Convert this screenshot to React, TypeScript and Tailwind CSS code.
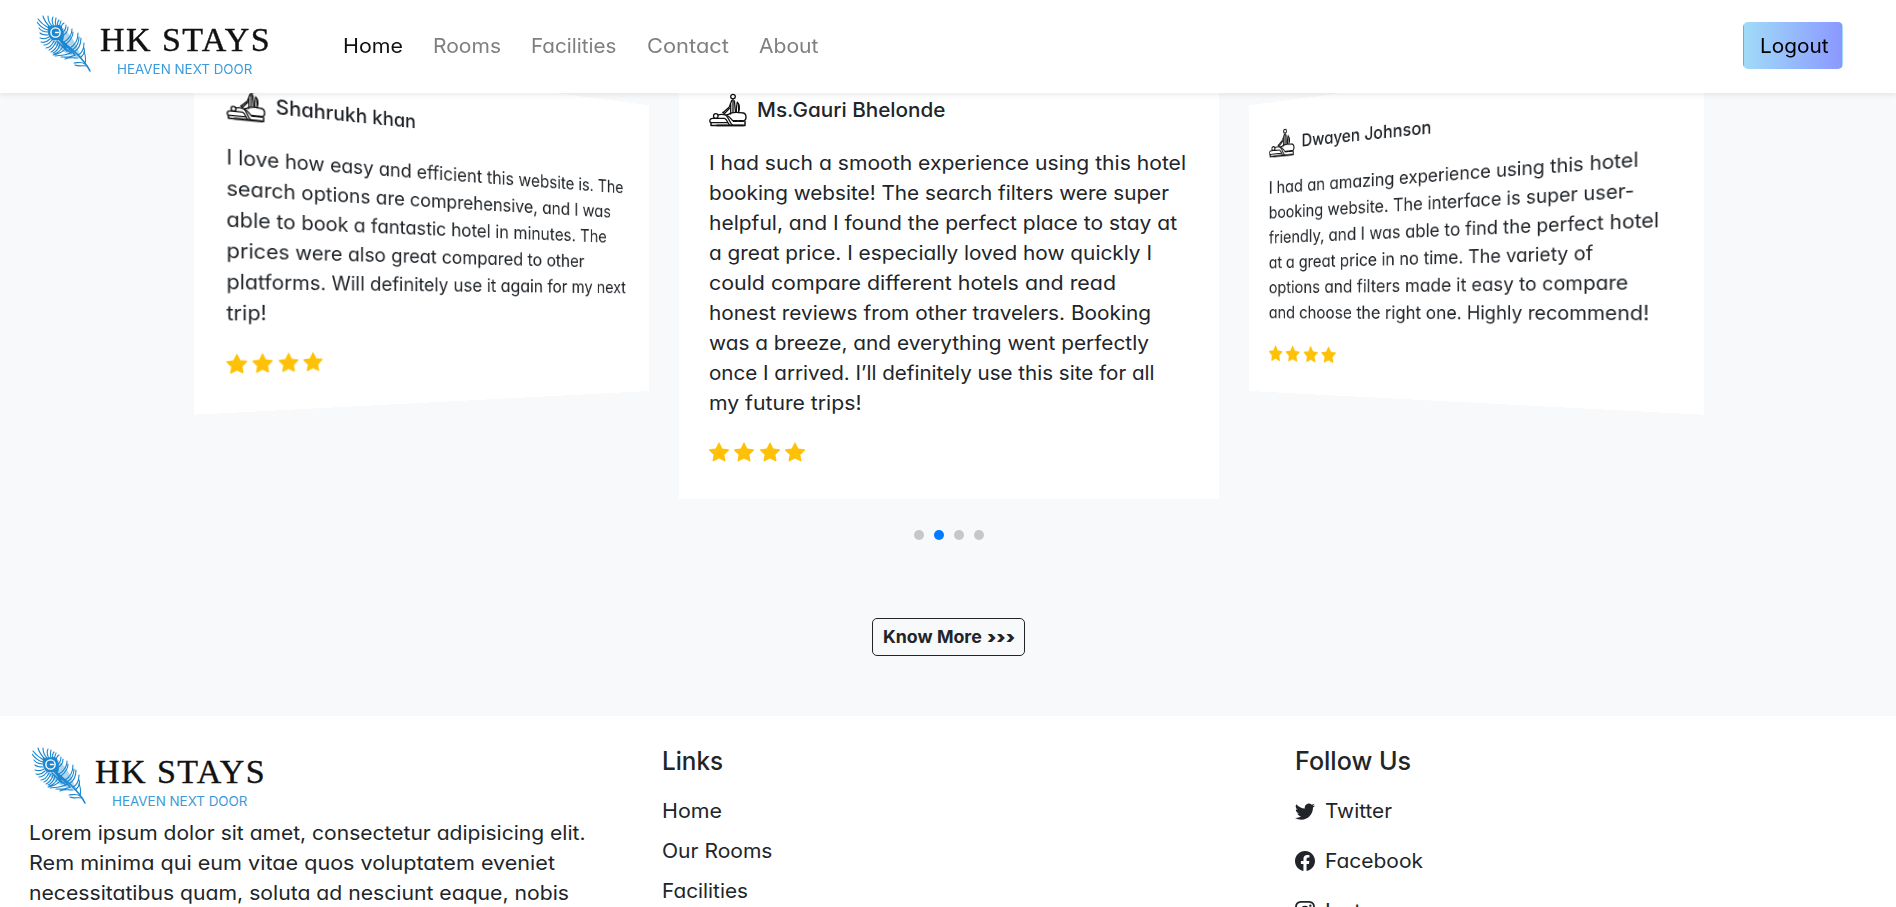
import { useLayoutEffect, useRef } from "react";
import type { ReactNode } from "react";
import { BsFacebook, BsInstagram, BsStarFill, BsTwitter } from "react-icons/bs";

type FitProps = { w: number; track?: boolean; className?: string; children: string };

/* Sets a single line of text to exactly `w` pixels, by widening its glyphs or, with `track`, its letter gaps. */
function Fit({ w, track = false, className = "", children }: FitProps) {
  const ref = useRef<HTMLSpanElement>(null);
  useLayoutEffect(() => {
    const el = ref.current;
    if (!el) return;
    el.style.letterSpacing = "0px";
    const natural = parseFloat(getComputedStyle(el).width);
    if (track) {
      el.style.letterSpacing = `${(w - natural) / children.length}px`;
    } else {
      el.style.transform = `scaleX(${w / natural})`;
    }
  }, [w, track, children]);
  return (
    <span className={`inline-block whitespace-pre ${className}`} style={{ width: w }}>
      <span ref={ref} className="inline-block origin-left">
        {children}
      </span>
    </span>
  );
}

function Feather() {
  return (
    <svg viewBox="0 0 54 57" className="h-[57px] w-[54px] shrink-0" fill="none" stroke="#1b87d0" strokeLinecap="round">
      <path d="M11 11L23 10C31 17 38 25 42 37L45 43C36 42 27 39 20 31C13 26 10 18 11 11Z" fill="#1b87d0" fillOpacity="0.35" stroke="none" />
      <path d="M53 56C49 48 45 44 39 38C32 32 25 27 20 20" strokeWidth="1.6" />
      <g strokeWidth="1.1">
        <path d="M12 13C8 11 4 8 1 4M11 15C7 14 3 11 0 7M11 17C7 17 4 16 2 13M11 20C8 20 5 20 3 18M12 22C9 24 6 24 3 23M13 24C10 27 7 28 4 27" />
        <path d="M13 12C10 9 7 5 6 1M15 11C12 8 11 4 11 1M17 11C15 8 15 4 16 2M19 11C18 8 18 6 19 3M21 12C20 8 21 6 22 5M23 13C22 10 23 8 24 6M24 15C24 11 25 9 27 8" />
        <path d="M15 25C12 29 9 30 7 30M17 26C15 30 12 33 9 33M19 27C17 31 15 34 12 35M21 28C20 32 18 35 14 37M23 29C22 33 19 37 16 38" />
        <path d="M25 18C28 16 29 13 29 10M25 21C29 19 31 15 31 12M27 27C32 24 35 19 35 14M29 29C34 25 36 21 36 17M33 33C38 30 41 25 41 18M35 35C40 32 42 28 42 22M37 37C42 34 44 29 44 23M41 40C45 38 47 34 47 28M43 43C47 40 48 36 47 33" />
        <path d="M26 31C24 35 21 38 17 39M29 33C26 37 22 39 16 40M35 37C30 41 23 40 18 41M38 40C33 43 27 42 24 42M41 43C37 43 32 42 28 44M48 49C44 46 41 48 37 48M50 51C46 50 42 52 38 50M48 49C49 44 49 41 47 37" />
        <path d="M22 24L29 33M20 26L30 36M25 26L33 35M24 30L34 38M28 29L38 40" strokeWidth="1.6" />
      </g>
      <path d="M11.5 11.5L23 10.5C26 14 27 19 26 24.5L15 24.5C12 22 10.5 17 11.5 11.5Z" fill="#1b87d0" />
      <circle cx="18.5" cy="17.5" r="4.6" stroke="#fff" strokeWidth="1.4" />
      <path d="M18.5 17.5h2.8" stroke="#fff" strokeWidth="1.3" />
    </svg>
  );
}

function Logo() {
  return (
    <div className="flex items-start">
      <Feather />
      <div className="ml-[9px] flex flex-col items-start pt-[9px]">
        <Fit track w={171} className="font-['Liberation_Serif',serif] text-[34px] leading-[32px] text-[#111] [-webkit-text-stroke:0.4px_#111]">
          HK STAYS
        </Fit>
        <Fit w={135.5} className="mt-px ml-[16.5px] text-[13px] leading-[24px] text-[#3b9ad9]">
          HEAVEN NEXT DOOR
        </Fit>
      </div>
    </div>
  );
}

function MassageIcon() {
  return (
    <svg viewBox="0 0 38 38" className="h-[38px] w-[38px] shrink-0" fill="none" stroke="#111" strokeWidth="1.3" strokeLinecap="round" strokeLinejoin="round">
      <circle cx="24" cy="6.6" r="2.3" />
      <path d="M24 9V22M22.7 10.5L20.3 17L14.2 22.4M25.4 10.8L26.4 21.8M21.7 14V24" />
      <path d="M20.3 18.5L15.5 23.6L13.8 22.4" />
      <path d="M27.4 22C27 18 28 14.5 28.3 12.2C30.6 14.5 30.8 19 29.6 22.6" />
      <path d="M29.5 14.5V22" strokeWidth="1" />
      <path d="M20 24.2C22 22.2 30 22.4 34.5 23C37.6 23.8 38 29.6 34.8 31H24.5C22 30 21 26 17 25.2L20 24.2Z" />
      <circle cx="6.8" cy="26" r="2.3" />
      <path d="M9 24.8C12 24.2 15 24.4 17 25.2C19.6 27 20 32 23.4 35.2M3.6 28.4C.2 28.4 .2 32.4 2 32.6H18M3.6 28.4H15.5C18 29 18.6 33 20.6 35.4" />
      <path d="M2 32.6V35.4H36V31.4" strokeWidth="1.5" />
      <path d="M8 35.4H34" strokeWidth="1.9" />
      <path d="M24.5 31H28M30 31H34" strokeWidth="1.8" />
    </svg>
  );
}

type Review = { name: string; nameWidth: number; lines: [string, number][] };

const reviews: Review[] = [
  {
    name: "Shahrukh khan",
    nameWidth: 151,
    lines: [
      ["I love how easy and efficient this website is. The", 471.5],
      ["search options are comprehensive, and I was", 453],
      ["able to book a fantastic hotel in minutes. The", 447],
      ["prices were also great compared to other", 415],
      ["platforms. Will definitely use it again for my next", 475],
      ["trip!", 39],
    ],
  },
  {
    name: "Ms.Gauri Bhelonde",
    nameWidth: 188.5,
    lines: [
      ["I had such a smooth experience using this hotel", 477],
      ["booking website! The search filters were super", 460],
      ["helpful, and I found the perfect place to stay at", 468],
      ["a great price. I especially loved how quickly I", 443],
      ["could compare different hotels and read", 407],
      ["honest reviews from other travelers. Booking", 442],
      ["was a breeze, and everything went perfectly", 440],
      ["once I arrived. I’ll definitely use this site for all", 445.5],
      ["my future trips!", 152.5],
    ],
  },
  {
    name: "Dwayen Johnson",
    nameWidth: 172.5,
    lines: [
      ["I had an amazing experience using this hotel", 448],
      ["booking website. The interface is super user-", 444],
      ["friendly, and I was able to find the perfect hotel", 468],
      ["at a great price in no time. The variety of", 402.5],
      ["options and filters made it easy to compare", 438],
      ["and choose the right one. Highly recommend!", 458.5],
    ],
  },
];

function ReviewCard({ review, className = "" }: { review: Review; className?: string }) {
  return (
    <article className={`w-[540px] bg-white p-[30px] text-[#212529] ${className}`}>
      <div className="mb-5 flex items-center">
        <MassageIcon />
        <h6 className="ml-[9.5px] flex pt-[2px] text-[20px] leading-6 font-medium">
          <Fit w={review.nameWidth}>{review.name}</Fit>
        </h6>
      </div>
      <p className="mb-5 flex flex-col items-start text-[20px] leading-[30px]">
        {review.lines.map(([text, w]) => (
          <Fit key={text} w={w}>
            {text}
          </Fit>
        ))}
      </p>
      <div className="flex h-[31px] items-start gap-[5.4px] pt-[4.4px] text-[20px] text-[#ffc107]">
        <BsStarFill />
        <BsStarFill />
        <BsStarFill />
        <BsStarFill />
      </div>
    </article>
  );
}

function Header() {
  const links: [string, number, string][] = [
    ["Home", 60, "text-[#111]"],
    ["Rooms", 68, "text-[#7f7f7f]"],
    ["Facilities", 85.5, "text-[#7f7f7f]"],
    ["Contact", 82, "text-[#7f7f7f]"],
    ["About", 59.5, "text-[#7f7f7f]"],
  ];
  return (
    <header className="relative z-10 flex h-[93px] shrink-0 items-center bg-white pr-[53px] pb-[2px] pl-[37px] shadow-[0_2.5px_5px_rgba(0,0,0,0.075)]">
      <div className="w-[305.5px] pt-[4px]">
        <Logo />
      </div>
      <nav className="flex gap-[30.3px] text-[20px] leading-[30px]">
        {links.map(([label, w, color]) => (
          <a key={label} className={color}>
            <Fit w={w}>{label}</Fit>
          </a>
        ))}
      </nav>
      <button className="ml-auto flex h-[47px] w-[100px] items-center justify-center rounded-[5px] border border-transparent bg-linear-to-r from-[#a1dbf7] to-[#8b98ff] text-[20px] leading-[30px] text-black">
        <Fit w={68.5}>Logout</Fit>
      </button>
    </header>
  );
}

function Dot({ active = false }: { active?: boolean }) {
  return <span className={`size-[10px] rounded-full ${active ? "bg-[#007aff]" : "bg-[#c6c7c8]"}`} />;
}

function FooterColumn({ children }: { children: ReactNode }) {
  return <div className="w-[632.7px] shrink-0 p-[30px]">{children}</div>;
}

function Footer() {
  return (
    <footer className="-ml-px flex w-[1898px] bg-white text-[20px] leading-[30px] text-[#212529]">
      <FooterColumn>
        <div className="mt-[1px] mb-[5px] ml-[3px]">
          <Logo />
        </div>
        <p className="flex flex-col items-start">
          <Fit w={556.5}>Lorem ipsum dolor sit amet, consectetur adipisicing elit.</Fit>
          <Fit w={526}>Rem minima qui eum vitae quos voluptatem eveniet</Fit>
          <Fit w={540}>necessitatibus quam, soluta ad nesciunt eaque, nobis</Fit>
        </p>
      </FooterColumn>
      <FooterColumn>
        <h5 className="mb-5 flex text-[25px] leading-[30px] font-medium">
          <Fit w={61}>Links</Fit>
        </h5>
        <div className="flex flex-col items-start gap-[10px]">
          <Fit w={60}>Home</Fit>
          <Fit w={110.5}>Our Rooms</Fit>
          <Fit w={86}>Facilities</Fit>
        </div>
      </FooterColumn>
      <FooterColumn>
        <h5 className="mb-5 ml-[0.8px] flex text-[25px] leading-[30px] font-medium">
          <Fit w={116}>Follow Us</Fit>
        </h5>
        <div className="ml-[0.8px] flex flex-col gap-5">
          <a className="flex items-center gap-[10px]">
            <BsTwitter />
            <Fit w={67}>Twitter</Fit>
          </a>
          <a className="flex items-center gap-[10px]">
            <BsFacebook />
            <Fit w={98}>Facebook</Fit>
          </a>
          <a className="flex items-center gap-[10px]">
            <BsInstagram />
            <Fit w={101}>Instagram</Fit>
          </a>
        </div>
      </FooterColumn>
    </footer>
  );
}

export default function App() {
  return (
    <div className="flex h-[907px] w-[1896px] flex-col overflow-hidden bg-[#f8f9fb] font-['Inter','Open_Sans',sans-serif] [font-feature-settings:'cv11'_1]">
      <Header />
      <main className="-mt-[33px] flex h-[656px] shrink-0 flex-col">
        <div className="ml-[139px] flex w-[1620px] items-start [perspective:1500px] [perspective-origin:50%_249.7px]">
          <ReviewCard review={reviews[0]} className="[transform:translate3d(0,0,-125px)_rotateY(50deg)]" />
          <ReviewCard review={reviews[1]} />
          <ReviewCard review={reviews[2]} className="[transform:translate3d(0,0,-125px)_rotateY(-50deg)]" />
        </div>
        <div className="mt-[31px] ml-[1px] flex justify-center gap-[10px]">
          <Dot />
          <Dot active />
          <Dot />
          <Dot />
        </div>
        <div className="mt-[78px] flex justify-center">
          <button className="flex h-[38px] w-[153px] items-center justify-center rounded-[5px] border border-[#212529] text-[17.5px] leading-[26px] font-bold text-[#212529]">
            <Fit w={103}>Know More </Fit>
            <Fit w={28} className="font-black">›››</Fit>
          </button>
        </div>
      </main>
      <Footer />
    </div>
  );
}
